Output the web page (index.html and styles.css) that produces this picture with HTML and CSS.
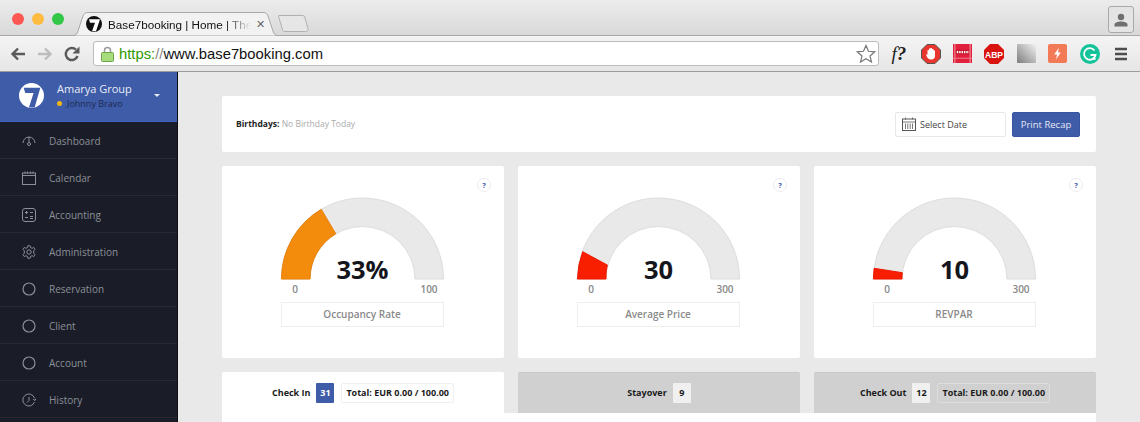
FILE: index.html
```html
<!DOCTYPE html>
<html lang="en">
<head>
    <meta charset="UTF-8">
    <title>Base7booking | Home</title>
    <link rel="stylesheet" href="styles.css">
</head>
<body>

    <div class="browser">
        <div class="tabstrip">
            <div class="lights">
                <span class="light red"></span>
                <span class="light yellow"></span>
                <span class="light green"></span>
            </div>
            <div class="tab">
                <svg class="tab-shape" width="216" height="24" viewBox="0 0 216 24"><path d="M0 23.500H3C6 23.500 7 22 8 19L13 4C14 1.500 15 .5 18 .5H193C196 .5 197 1.500 198 4L203 19C204 22 205 23.500 208 23.500H216" fill="#f2f2f2" stroke="#a8a8a8"/></svg>
                <svg class="favicon" width="16" height="16" viewBox="0 0 24 24"><circle cx="12" cy="12" r="12" fill="#111"/><path d="M4.500 5H21L15 23H9L13.500 10H6Z" fill="#fff"/></svg>
                <span class="tab-title">Base7booking | Home | The</span>
                <span class="tab-close">&#10005;</span>
            </div>
            <svg class="newtab" width="31" height="17" viewBox="0 0 31 17"><path d="M1 .5H24C26 .5 26.500 1 27 3L30 13.500C30.500 15.500 29.500 16.500 27.500 16.500H7C5.500 16.500 5 16 4.500 14.500L.7 2C.5 1 .5 .5 1 .5Z" fill="#e6e6e6" stroke="#b0b0b0"/></svg>
            <div class="profile">
                <svg width="14" height="14" viewBox="0 0 14 14"><circle cx="7" cy="4" r="3.200" fill="#6f6f6f"/><path d="M.5 13.500V11.500C.5 9.500 4 8.500 7 8.500S13.500 9.500 13.500 11.500V13.500Z" fill="#6f6f6f"/></svg>
            </div>
        </div>
        <div class="toolbar">
            <div class="nav">
                <svg width="16" height="14" viewBox="0 0 16 14"><path d="M15 7H3M8 1.500 2.500 7 8 12.500" fill="none" stroke="#5a5a5a" stroke-width="2.400"/></svg>
                <svg width="16" height="14" viewBox="0 0 16 14"><path d="M1 7H13M8 1.500 13.500 7 8 12.500" fill="none" stroke="#bdbdbd" stroke-width="2.400"/></svg>
                <svg width="16" height="16" viewBox="0 0 16 16"><path d="M13.500 10A6 6 0 1 1 12 3.700" fill="none" stroke="#5a5a5a" stroke-width="2.400"/><path d="M15.500 .5V7.500H8.500Z" fill="#5a5a5a"/></svg>
            </div>
            <div class="omnibox">
                <svg width="13" height="16" viewBox="0 0 13 16"><path d="M3.500 7V4.500A3 3 0 0 1 9.500 4.500V7" fill="none" stroke="#9a9a9a" stroke-width="1.500"/><rect x=".5" y="6.500" width="12" height="9" rx="1" fill="#a6dc7c" stroke="#6fa34c"/></svg>
                <span class="url"><span class="url-https">https:</span><span class="url-slash">//</span>www.base7booking.com</span>
                <svg class="star" width="20" height="19" viewBox="0 0 20 19"><path d="M10 1.500 12.500 7.300 18.800 7.800 14 12 15.500 18 10 14.800 4.500 18 6 12 1.200 7.800 7.500 7.300Z" fill="#fff" stroke="#777" stroke-width="1.200"/></svg>
            </div>
            <div class="extensions">
                <span class="ext ext-f">f<b>?</b></span>
                <span class="ext"><svg width="20" height="20" viewBox="0 0 20 20"><path d="M6 .5H14L19.500 6V14L14 19.500H6L.5 14V6Z" fill="#e8352e" stroke="#555"/><path d="M6.500 9V6H8V4.500H9.500V4H11V5H12.500V6.500H14V12C14 14 12.500 15.500 10.500 15.500H9.500C8 15.500 7 14.500 6 13L5 10.500 6.500 10.500Z" fill="#fff"/></svg></span>
                <span class="ext"><svg width="19" height="19" viewBox="0 0 20 20"><rect width="20" height="20" fill="#e0203c"/><path d="M2 0V20M18 0V20" stroke="#f5a0a8"/><path d="M3 6H17V11H3Z" fill="#c2182c"/><path d="M4 8.500H17" stroke="#fff" stroke-width="2.500" stroke-dasharray="1.500 1"/><path d="M0 15H20" stroke="#f08090"/></svg></span>
                <span class="ext"><svg width="20" height="20" viewBox="0 0 20 20"><path d="M6 0H14L20 6V14L14 20H6L0 14V6Z" fill="#d9140f"/><text x="10" y="13.500" class="abp-text">ABP</text></svg></span>
                <span class="ext"><svg width="19" height="19" viewBox="0 0 20 20"><defs><linearGradient id="fadeGray" x1="0" y1="1" x2="1" y2="0"><stop offset="0" stop-color="#7d7d7d"/><stop offset="1" stop-color="#f2f2f2"/></linearGradient></defs><rect width="20" height="20" rx="1" fill="url(#fadeGray)"/></svg></span>
                <span class="ext"><svg width="19" height="19" viewBox="0 0 20 20"><rect width="20" height="20" rx="2" fill="#f27a56"/><path d="M11.500 4 6.500 11H9.500L8.500 16 13.500 9H10.500Z" fill="#fff"/></svg></span>
                <span class="ext"><svg width="20" height="20" viewBox="0 0 20 20"><circle cx="10" cy="10" r="10" fill="#15c39a"/><path d="M14.500 6.500A5.800 5.800 0 1 0 15.500 11H10.500M12.500 14.500 15.500 15" fill="none" stroke="#fff" stroke-width="1.800"/></svg></span>
                <span class="ext"><svg width="14" height="14" viewBox="0 0 14 14"><path d="M1 2H13M1 7H13M1 12H13" stroke="#4d4d4d" stroke-width="2.400"/></svg></span>
            </div>
        </div>
    </div>

    <div class="app">
        <div class="sidebar">
            <div class="account">
                <svg class="logo" width="25" height="25" viewBox="0 0 24 24"><circle cx="12" cy="12" r="12" fill="#fff"/><path d="M4.500 4.500H20.500L15 23.500H9.500L14 9.500H6Z" fill="#3f5ca8"/></svg>
                <div class="account-text">
                    <div class="account-name">Amarya Group</div>
                    <div class="account-user"><span class="status-dot"></span>Johnny Bravo</div>
                </div>
                <span class="caret"></span>
            </div>
            <a class="menu-item">
                <svg width="14" height="14" viewBox="0 0 14 14"><path d="M1 9A6 6 0 0 1 13 9M7 3V8" fill="none" stroke="#8c8f98"/><circle cx="7" cy="10" r="1.500" fill="none" stroke="#8c8f98"/></svg>
                Dashboard
            </a>
            <a class="menu-item">
                <svg width="14" height="14" viewBox="0 0 14 14"><rect x=".5" y="2" width="13" height="11.500" fill="none" stroke="#8c8f98"/><path d="M.5 4.500H13.500M3 .5V2.500M5.500 .5V2.500M8.500 .5V2.500M11 .5V2.500" stroke="#8c8f98"/></svg>
                Calendar
            </a>
            <a class="menu-item">
                <svg width="14" height="14" viewBox="0 0 14 14"><rect x=".5" y=".5" width="13" height="13" rx="2.500" fill="none" stroke="#8c8f98"/><path d="M3 4.500H6M4.500 3V6M8 4.500H11M3 9.500H6M8 8.500H11M8 10.500H11" stroke="#8c8f98"/></svg>
                Accounting
            </a>
            <a class="menu-item">
                <svg width="14" height="14" viewBox="0 0 14 14"><path d="M5.800.8H8.200L8.600 2.600 10.100 3.300 11.700 2.400 13 4.500 11.700 5.800V8.200L13 9.500 11.700 11.600 10.100 10.700 8.600 11.400 8.200 13.200H5.800L5.400 11.400 3.900 10.700 2.300 11.600 1 9.500 2.300 8.200V5.800L1 4.500 2.300 2.400 3.900 3.300 5.400 2.600Z" fill="none" stroke="#8c8f98"/><circle cx="7" cy="7" r="2.200" fill="none" stroke="#8c8f98"/></svg>
                Administration
            </a>
            <a class="menu-item">
                <svg width="14" height="14" viewBox="0 0 14 14"><circle cx="7" cy="7" r="6" fill="none" stroke="#8c8f98" stroke-width="1.200"/></svg>
                Reservation
            </a>
            <a class="menu-item">
                <svg width="14" height="14" viewBox="0 0 14 14"><circle cx="7" cy="7" r="6" fill="none" stroke="#8c8f98" stroke-width="1.200"/></svg>
                Client
            </a>
            <a class="menu-item">
                <svg width="14" height="14" viewBox="0 0 14 14"><circle cx="7" cy="7" r="6" fill="none" stroke="#8c8f98" stroke-width="1.200"/></svg>
                Account
            </a>
            <a class="menu-item">
                <svg width="14" height="14" viewBox="0 0 14 14"><path d="M12.500 9A6 6 0 1 1 12.500 5M7 4V7.500L5 9.500M11 6 13 7.500 14 5.500" fill="none" stroke="#8c8f98"/></svg>
                History
            </a>
        </div>

        <div class="main">
            <div class="card recap">
                <div class="birthdays"><b>Birthdays:</b> <span>No Birthday Today</span></div>
                <div class="recap-actions">
                    <div class="date-input">
                        <svg width="14" height="14" viewBox="0 0 14 14"><rect x=".5" y="2" width="13" height="11.500" fill="none" stroke="#555"/><path d="M.5 5H13.500M3.500 .5V2.500M10.500 .5V2.500M3.500 6.500V12M5.800 6.500V12M8.200 6.500V12M10.500 6.500V12" stroke="#555" stroke-width=".8"/></svg>
                        Select Date
                    </div>
                    <button class="print-btn">Print Recap</button>
                </div>
            </div>

            <div class="gauges">
                <div class="card gauge-card">
                    <span class="help">?</span>
                    <div class="gauge">
                        <svg width="163" height="83" viewBox="0 0 163 83">
                            <path class="gauge-track" d="M.5 82A81 81 0 0 1 162.500 82H134A52.500 52.500 0 0 0 29 82Z"/>
                            <path class="gauge-fill orange" d="M.5 82A81 81 0 0 1 40.300 12.300L54.800 36.800A52.500 52.500 0 0 0 29 82Z"/>
                        </svg>
                        <span class="gauge-value">33%</span>
                    </div>
                    <div class="gauge-scale"><span>0</span><span>100</span></div>
                    <div class="gauge-label">Occupancy Rate</div>
                </div>
                <div class="card gauge-card">
                    <span class="help">?</span>
                    <div class="gauge">
                        <svg width="163" height="83" viewBox="0 0 163 83">
                            <path class="gauge-track" d="M.5 82A81 81 0 0 1 162.500 82H134A52.500 52.500 0 0 0 29 82Z"/>
                            <path class="gauge-fill red" d="M.5 82A81 81 0 0 1 5.700 54.700L30.300 68A52.500 52.500 0 0 0 29 82Z"/>
                        </svg>
                        <span class="gauge-value">30</span>
                    </div>
                    <div class="gauge-scale"><span>0</span><span>300</span></div>
                    <div class="gauge-label">Average Price</div>
                </div>
                <div class="card gauge-card">
                    <span class="help">?</span>
                    <div class="gauge">
                        <svg width="163" height="83" viewBox="0 0 163 83">
                            <path class="gauge-track" d="M.5 82A81 81 0 0 1 162.500 82H134A52.500 52.500 0 0 0 29 82Z"/>
                            <path class="gauge-fill red" d="M.5 82A81 81 0 0 1 1.200 71.300L29.300 75.700A52.500 52.500 0 0 0 29 82Z"/>
                        </svg>
                        <span class="gauge-value">10</span>
                    </div>
                    <div class="gauge-scale"><span>0</span><span>300</span></div>
                    <div class="gauge-label">REVPAR</div>
                </div>
            </div>

            <div class="tabs">
                <div class="stat-tab active">
                    Check In <span class="count">31</span> <span class="total">Total: EUR 0.00 / 100.00</span>
                </div>
                <div class="stat-tab">
                    Stayover <span class="count">9</span>
                </div>
                <div class="stat-tab">
                    Check Out <span class="count">12</span> <span class="total">Total: EUR 0.00 / 100.00</span>
                </div>
            </div>
            <div class="tab-panel"></div>
        </div>
    </div>

</body>
</html>
```

FILE: styles.css
```css
html, body {
    height: 100%;
    margin: 0;
    overflow: hidden;
}
body {
    font-family: "Open Sans", sans-serif;
    display: flex;
    flex-direction: column;
    background-color: #e9e9e9;
}

/* browser window */
.browser {
    height: 72px;
    flex-shrink: 0;
    font-family: "Liberation Sans", sans-serif;
    border-bottom: 1px solid #9c9c9c;
    box-sizing: border-box;
}
.tabstrip {
    height: 36px;
    box-sizing: border-box;
    display: flex;
    align-items: flex-end;
    position: relative;
    border-bottom: 1px solid #a8a8a8;
    background: linear-gradient(#ececec, #d9d9d9);
}
.lights {
    display: flex;
    gap: 8px;
    padding: 0 0 10px 12px;
    width: 58px;
    box-sizing: content-box;
    flex-shrink: 0;
}
.light {
    width: 12px;
    height: 12px;
    border-radius: 50%;
}
.light.red { background-color: #fc5753; }
.light.yellow { background-color: #fdbc40; }
.light.green { background-color: #33c748; }
.tab {
    position: relative;
    width: 216px;
    height: 24px;
    margin-bottom: -1px;
    display: flex;
    align-items: center;
    padding-left: 17px;
    box-sizing: border-box;
    flex-shrink: 0;
    font-size: 11.700px;
}
.tab-shape {
    position: absolute;
    left: 0;
    top: 0;
}
.favicon {
    position: relative;
    margin-left: -1px;
    flex-shrink: 0;
}
.tab-title {
    position: relative;
    width: 147px;
    margin-left: 6px;
    white-space: nowrap;
    color: #111;
    -webkit-mask-image: linear-gradient(to right, #000 80%, transparent 97%);
    mask-image: linear-gradient(to right, #000 80%, transparent 97%);
}
.tab-close {
    position: relative;
    margin-left: 1px;
    font-size: 11px;
    color: #666;
}
.newtab {
    margin: 0 0 3px -8px;
}
.profile {
    position: absolute;
    right: 6px;
    top: 6px;
    width: 24px;
    height: 25px;
    border: 1px solid #a9a9a9;
    border-radius: 3px;
    display: flex;
    align-items: center;
    justify-content: center;
    background-color: #e4e4e4;
}
.toolbar {
    height: 35px;
    display: flex;
    align-items: center;
    background: linear-gradient(#f4f4f4, #e6e6e6);
}
.nav {
    display: flex;
    align-items: center;
    gap: 11px;
    padding-left: 10px;
    width: 83px;
    flex-shrink: 0;
}
.omnibox {
    width: 786px;
    height: 25px;
    box-sizing: border-box;
    border: 1px solid #bcbcbc;
    border-radius: 3px;
    background-color: #fff;
    display: flex;
    align-items: center;
    padding: 0 2px 0 7px;
    flex-shrink: 0;
}
.url {
    flex-grow: 1;
    margin-left: 5px;
    font-size: 14.800px;
    color: #111;
}
.url-https { color: #2e9a00; }
.url-slash { color: #8a8a8a; }
.extensions {
    display: flex;
    align-items: center;
    padding-left: 4px;
}
.ext {
    width: 31.800px;
    height: 24px;
    display: flex;
    align-items: center;
    justify-content: center;
}
.ext-f {
    font-family: "Liberation Serif", serif;
    font-style: italic;
    font-size: 19px;
    color: #222;
}
.abp-text {
    font-family: "Liberation Sans", sans-serif;
    font-weight: bold;
    font-size: 8.500px;
    fill: #fff;
    text-anchor: middle;
}

/* sidebar */
.app {
    flex-grow: 1;
    display: flex;
    min-height: 0;
}
.sidebar {
    width: 178px;
    flex-shrink: 0;
    background-color: #1a1d27;
    border-right: 1px solid #0d0e12;
    box-sizing: border-box;
}
.account {
    height: 50px;
    box-sizing: border-box;
    background-color: #3f5ca8;
    border-bottom: 1px solid #3c66c4;
    display: flex;
    align-items: center;
    padding: 0 17px 3px 19px;
}
.logo {
    flex-shrink: 0;
}
.account-text {
    flex-grow: 1;
    margin-left: 13px;
    padding-top: 1px;
}
.account-name {
    font-size: 11px;
    line-height: 16px;
    color: #e8ecf6;
}
.account-user {
    font-size: 9px;
    line-height: 13px;
    color: #1d2a50;
    display: flex;
    align-items: center;
}
.status-dot {
    width: 5px;
    height: 5px;
    border-radius: 50%;
    background-color: #f5b512;
    margin-right: 5px;
}
.caret {
    border: 3px solid transparent;
    border-top-color: #e8ecf6;
    border-bottom: 0;
}
.menu-item {
    height: 37px;
    box-sizing: border-box;
    display: flex;
    align-items: center;
    gap: 13px;
    padding: 1px 0 0 22px;
    border-bottom: 1px solid #272a34;
    font-size: 10px;
    color: #8c8f98;
}

/* main area */
.main {
    flex-grow: 1;
    padding: 24px 44px 0;
    min-width: 0;
    display: flex;
    flex-direction: column;
}
.card {
    background-color: #fff;
    border-radius: 2px;
}
.recap {
    height: 56px;
    flex-shrink: 0;
    display: flex;
    align-items: center;
    justify-content: space-between;
    padding: 0 16px 0 14px;
}
.birthdays {
    font-size: 8.500px;
    color: #aaa;
    padding-bottom: 1px;
}
.birthdays b {
    color: #222;
}
.recap-actions {
    display: flex;
    gap: 6px;
}
.date-input {
    width: 111px;
    height: 25px;
    box-sizing: border-box;
    border: 1px solid #e8e8e8;
    border-radius: 2px;
    display: flex;
    align-items: center;
    gap: 4px;
    padding-left: 6px;
    font-size: 9px;
    color: #444;
}
.print-btn {
    width: 68px;
    height: 25px;
    padding: 0;
    border: 1px solid #3755a6;
    border-radius: 2px;
    background-color: #3f5ca8;
    color: #e4e9f5;
    font-family: "Open Sans", sans-serif;
    font-size: 9.500px;
}
.gauges {
    display: grid;
    grid-template-columns: repeat(3, 1fr);
    gap: 14px;
    margin-top: 14px;
    flex-shrink: 0;
}
.gauge-card {
    height: 192px;
    position: relative;
    display: flex;
    flex-direction: column;
    align-items: center;
    padding: 31px 2px 0 0;
    box-sizing: border-box;
}
.help {
    position: absolute;
    right: 13px;
    top: 12px;
    width: 12px;
    height: 12px;
    border: 1px solid #ececec;
    border-radius: 50%;
    font-size: 7.500px;
    font-weight: bold;
    line-height: 12px;
    text-align: center;
    color: #3f5ca8;
}
.gauge {
    position: relative;
    height: 83px;
}
.gauge svg {
    display: block;
}
.gauge-track {
    fill: #e9e9e9;
    stroke: #dcdcdc;
}
.gauge-fill {
    stroke-width: 1;
}
.gauge-fill.orange {
    fill: #f38b0d;
    stroke: #e8820a;
}
.gauge-fill.red {
    fill: #f71f00;
    stroke: #ee1a00;
}
.gauge-value {
    position: absolute;
    left: 1px;
    right: 0;
    bottom: -7px;
    text-align: center;
    font-size: 25.500px;
    font-weight: 700;
    line-height: 36px;
    color: #14161c;
}
.gauge-scale {
    width: 163px;
    display: flex;
    justify-content: space-between;
    font-size: 10px;
    font-weight: 600;
    line-height: 14px;
    margin-top: 2px;
    color: #888;
}
.gauge-scale span {
    width: 29px;
    text-align: center;
}
.gauge-label {
    width: 163px;
    height: 25px;
    box-sizing: border-box;
    margin-top: 6px;
    border: 1px solid #eee;
    font-size: 10px;
    font-weight: 600;
    line-height: 23px;
    text-align: center;
    color: #8a8a8a;
}
.tabs {
    display: grid;
    grid-template-columns: repeat(3, 1fr);
    gap: 14px;
    margin-top: 14px;
    flex-shrink: 0;
}
.stat-tab {
    height: 41px;
    box-sizing: border-box;
    display: flex;
    align-items: center;
    justify-content: center;
    gap: 6px;
    padding-bottom: 1px;
    background-color: #d0d0d0;
    border-top: 1px solid #c8c8c8;
    border-radius: 2px 2px 0 0;
    font-size: 9px;
    font-weight: 700;
    color: #1a1a1a;
}
.stat-tab.active {
    background-color: #fff;
    border-top-color: #fff;
}
.count {
    min-width: 18px;
    height: 20px;
    box-sizing: border-box;
    display: flex;
    align-items: center;
    justify-content: center;
    background-color: #f0f0f0;
    border-radius: 1px;
}
.active .count {
    background-color: #3f5ca8;
    color: #fff;
}
.total {
    height: 20px;
    box-sizing: border-box;
    display: flex;
    align-items: center;
    padding: 0 4px;
    margin-left: 1px;
    border: 1px solid #dedede;
    border-radius: 2px;
}
.active .total {
    border-color: #f0f0f0;
}
.tab-panel {
    flex-grow: 1;
    background-color: #fff;
}
```
